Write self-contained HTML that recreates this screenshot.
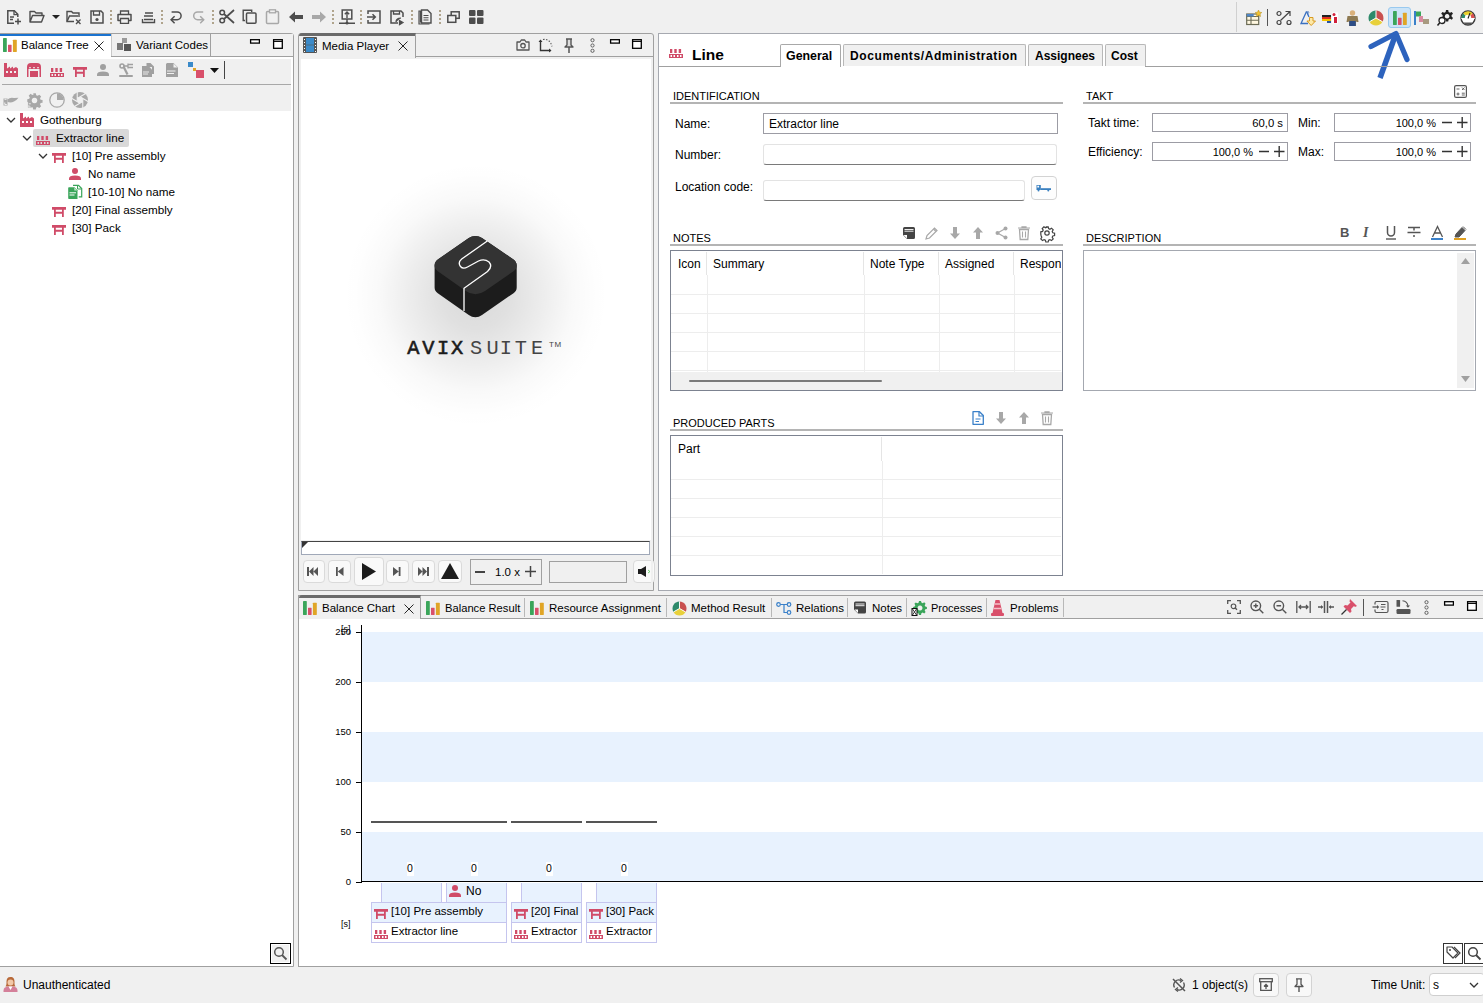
<!DOCTYPE html>
<html><head><meta charset="utf-8"><style>
*{margin:0;padding:0;box-sizing:border-box}
body{width:1483px;height:1003px;background:#f0f0f0;font-family:"Liberation Sans",sans-serif;font-size:12px;color:#000;position:relative;overflow:hidden}
.a{position:absolute}
.t{position:absolute;white-space:nowrap;line-height:14px;height:14px}
svg{position:absolute;overflow:visible}
.bd{border:1px solid #a0a0a0}
.w{background:#fff}
</style></head><body>


<svg width="0" height="0" style="position:absolute">
<defs>
<symbol id="factory" viewBox="0 0 14 14"><path fill="#d04b68" d="M0 0h3v5.5l3-2v2l3-2v2l3-1.5 2 1.5v8.5h-14z M2 8v2h2v-2z M6 8v2h2v-2z M10 8v2h2v-2z" fill-rule="evenodd"/></symbol>
<symbol id="warehouse" viewBox="0 0 14 14"><path fill="#d04b68" fill-rule="evenodd" d="M0 14V4Q0 0 4 0h6q4 0 4 4v10h-1.5V6H1.5V14z M2 4.3v1h2v-1z M6 4.3v1h2v-1z M10 4.3v1h2v-1z"/><rect x="3" y="8" width="8" height="6" fill="#d04b68"/></symbol>
<symbol id="line" viewBox="0 0 14 9"><path fill="#d04b68" fill-rule="evenodd" d="M1 0h2.3v4H1z M5.3 0h2.4v4H5.3z M9.7 0h2.4v4H9.7z M0 5h14v4H0z M1.5 6v2h1.5V6z M4.5 6v2h1.5V6z M8 6v2h1.5V6z M11 6v2h1.5V6z"/></symbol>
<symbol id="station" viewBox="0 0 14 10"><path fill="#d04b68" d="M0 0h14v2.8H0z M2 2.8h1.8V10H2z M10 2.8h1.8V10H10z M3.8 4.7h6.2v2H3.8z"/></symbol>
<symbol id="person" viewBox="0 0 12 12"><circle cx="6" cy="3" r="3" fill="currentColor"/><path fill="currentColor" d="M0 12v-1.5Q0 7.5 6 7.5t6 3V12z"/></symbol>
<symbol id="bars" viewBox="0 0 14 14"><rect x="0" y="0" width="3.8" height="14" rx=".4" fill="#3aa55a"/><rect x="5" y="6.7" width="3.6" height="7.3" rx=".4" fill="#d9506b"/><rect x="9.9" y="1.8" width="3.9" height="12.2" rx=".4" fill="#e0a526"/></symbol>
<symbol id="chev" viewBox="0 0 10 6"><path d="M1 1l4 4 4-4" fill="none" stroke="#333" stroke-width="1.3"/></symbol>
<symbol id="minbtn" viewBox="0 0 11 5"><rect x="1.6" y="0.7" width="8.8" height="3.4" fill="#fff" stroke="#000" stroke-width="1.3"/></symbol>
<symbol id="maxbtn" viewBox="0 0 11 10"><rect x="1.6" y="0.7" width="8.7" height="8.6" fill="#fff" stroke="#000" stroke-width="1.3"/><path d="M1.6 2.4h8.7" stroke="#000" stroke-width="1.1"/></symbol>
<symbol id="xbtn" viewBox="0 0 10 10"><path d="M0.5 0.5l9 9M9.5 0.5l-9 9" stroke="#111" stroke-width="0.9"/></symbol>
</defs>
</svg>
<!-- ============ PANELS ============ -->
<!-- left panel -->
<div class="a bd" style="left:-1px;top:33px;width:295px;height:934px;background:#fff;border-top-right-radius:3px"></div>
<div class="a" style="left:0;top:34px;width:293px;height:23px;background:#f0f0f0;border-bottom:1px solid #a0a0a0"></div>
<!-- media panel -->
<div class="a bd" style="left:298px;top:33px;width:356px;height:558px;background:#f0f0f0;border-top-right-radius:3px;border-top-left-radius:3px"></div>
<!-- editor panel -->
<div class="a bd" style="left:658px;top:33px;width:826px;height:558px;background:#fff;border-color:#a6a9b0"></div>
<!-- bottom panel -->
<div class="a bd" style="left:298px;top:595px;width:1186px;height:372px;background:#fff"></div>
<div class="a" style="left:299px;top:596px;width:1184px;height:23px;background:#f0f0f0"></div>



<!-- ============ TOP TOOLBAR ============ -->
<svg style="left:6px;top:9px" width="16" height="16" viewBox="0 0 16 16"><path d="M8 14.2H1.8V1.8h6.5l3.5 3.5V8" fill="none" stroke="#4d4d4d" stroke-width="1.5"/><path d="M8 1.8v3.8h3.8M4 8h4M4 10.5h3" fill="none" stroke="#4d4d4d" stroke-width="1.3"/><path d="M12 9.5v6M9 12.5h6" stroke="#4d4d4d" stroke-width="1.5"/></svg>
<svg style="left:29px;top:10px" width="16" height="13" viewBox="0 0 16 13"><path d="M1 12V1.5h4.5l1.5 1.5h6v2.5M1 12l2.5-6.5H15L12.5 12z" fill="none" stroke="#4d4d4d" stroke-width="1.4" stroke-linejoin="round"/></svg>
<svg style="left:52px;top:15px" width="8" height="4" viewBox="0 0 8 4"><path d="M0 0h8L4 4z" fill="#222"/></svg>
<svg style="left:66px;top:10px" width="16" height="15" viewBox="0 0 16 15"><path d="M8 11.5H1V1.5h4.5l1.5 1.5h6v4" fill="none" stroke="#4d4d4d" stroke-width="1.4"/><path d="M1 11.5l2.5-5.5H12" fill="none" stroke="#4d4d4d" stroke-width="1.4"/><path d="M10 9.5l4.5 4.5M14.5 9.5L10 14" stroke="#4d4d4d" stroke-width="1.4"/></svg>
<svg style="left:90px;top:10px" width="14" height="14" viewBox="0 0 14 14"><path d="M1 1h10l2 2v10H1z" fill="none" stroke="#4d4d4d" stroke-width="1.5"/><path d="M3.5 1v4h6V1" fill="none" stroke="#4d4d4d" stroke-width="1.3"/><circle cx="7" cy="9.5" r="1.6" fill="#4d4d4d"/></svg>
<div class="a" style="left:110px;top:10px;width:2px;height:15px;background:repeating-linear-gradient(#b0a48c 0 2px,transparent 2px 4px)"></div>
<svg style="left:117px;top:10px" width="15" height="14" viewBox="0 0 15 14"><path d="M3.5 4V1h8v3" fill="none" stroke="#4d4d4d" stroke-width="1.3"/><path d="M3 10.5H1V4.5h13v6h-2" fill="none" stroke="#4d4d4d" stroke-width="1.5" stroke-linejoin="round"/><path d="M3.5 8.5h8v4.8h-8z" fill="none" stroke="#4d4d4d" stroke-width="1.3"/></svg>
<svg style="left:141px;top:10px" width="15" height="14" viewBox="0 0 15 14"><path d="M4 3h8M3 6h9M1.5 9v3.5h12V9M3 9.5h9" fill="none" stroke="#4d4d4d" stroke-width="1.4"/></svg>
<div class="a" style="left:161px;top:10px;width:2px;height:15px;background:repeating-linear-gradient(#b0a48c 0 2px,transparent 2px 4px)"></div>
<svg style="left:165px;top:5px" width="45" height="25" viewBox="165 5 45 25"><path d="M171.6 11.9H177.2A3.9 3.9 0 0 1 177.2 19.7H171" fill="none" stroke="#4d4d4d" stroke-width="1.5"/><path d="M174.6 16.3L171.1 19.7 174.6 23.2" fill="none" stroke="#4d4d4d" stroke-width="1.5"/><path d="M203.2 11.9H197.6A3.9 3.9 0 0 0 197.6 19.7H203.5" fill="none" stroke="#a8a8a8" stroke-width="1.5"/><path d="M200.2 16.3L203.7 19.7 200.2 23.2" fill="none" stroke="#a8a8a8" stroke-width="1.5"/></svg>
<div class="a" style="left:212px;top:10px;width:2px;height:15px;background:repeating-linear-gradient(#b0a48c 0 2px,transparent 2px 4px)"></div>
<svg style="left:219px;top:9px" width="16" height="15" viewBox="0 0 16 15"><circle cx="3.2" cy="11.5" r="2.3" fill="none" stroke="#4d4d4d" stroke-width="1.5"/><circle cx="3.2" cy="3.5" r="2.3" fill="none" stroke="#4d4d4d" stroke-width="1.5"/><path d="M5 10L15 1M5 5l10 9" stroke="#4d4d4d" stroke-width="1.7"/></svg>
<svg style="left:242px;top:9px" width="15" height="15" viewBox="0 0 15 15"><path d="M3 11.5H1.2V1.2h8.5V3" fill="none" stroke="#4d4d4d" stroke-width="1.4"/><rect x="4.5" y="4" width="9.5" height="10.2" rx="1" fill="none" stroke="#4d4d4d" stroke-width="1.5"/></svg>
<svg style="left:265px;top:9px" width="15" height="15" viewBox="0 0 15 15"><rect x="1.5" y="2.5" width="12" height="12" rx="1" fill="none" stroke="#a8a8a8" stroke-width="1.5"/><rect x="4.5" y="0.8" width="6" height="3" fill="#f0f0f0" stroke="#a8a8a8" stroke-width="1.3"/></svg>
<svg style="left:289px;top:11px" width="14" height="12" viewBox="0 0 14 12"><path d="M0 6l6-5.5V4h8v4H6v3.5z" fill="#4d4d4d"/></svg>
<svg style="left:312px;top:11px" width="14" height="12" viewBox="0 0 14 12"><path d="M14 6L8 .5V4H0v4h8v3.5z" fill="#a8a8a8"/></svg>
<div class="a" style="left:332px;top:10px;width:2px;height:15px;background:repeating-linear-gradient(#b0a48c 0 2px,transparent 2px 4px)"></div>
<svg style="left:339px;top:9px" width="16" height="16" viewBox="0 0 16 16"><rect x="3.2" y="1" width="9.6" height="9" fill="none" stroke="#4d4d4d" stroke-width="1.5"/><path d="M8 9V3M5.8 5.2L8 3l2.2 2.2M8 10v3.5M0 14.2h16" fill="none" stroke="#4d4d4d" stroke-width="1.4"/><circle cx="8" cy="14" r="1.5" fill="#4d4d4d"/></svg>
<div class="a" style="left:360px;top:10px;width:2px;height:15px;background:repeating-linear-gradient(#b0a48c 0 2px,transparent 2px 4px)"></div>
<svg style="left:367px;top:10px" width="14" height="14" viewBox="0 0 14 14"><path d="M1 4V1h12v12H1v-3" fill="none" stroke="#4d4d4d" stroke-width="1.5"/><path d="M0 7h8M5.5 4.2L8.3 7l-2.8 2.8" fill="none" stroke="#4d4d4d" stroke-width="1.5"/></svg>
<svg style="left:390px;top:10px" width="16" height="15" viewBox="0 0 16 15"><path d="M8 13H1V1h10l2 2v4" fill="none" stroke="#4d4d4d" stroke-width="1.5"/><path d="M3.5 1v3h6V1" fill="none" stroke="#4d4d4d" stroke-width="1.3"/><path d="M6 12q0-4 5-4M9.5 10.5l3.5 2-3.5 2.2z" fill="#4d4d4d" stroke="#4d4d4d" stroke-width="1.2"/></svg>
<div class="a" style="left:411px;top:10px;width:2px;height:15px;background:repeating-linear-gradient(#b0a48c 0 2px,transparent 2px 4px)"></div>
<svg style="left:418px;top:9px" width="14" height="16" viewBox="0 0 14 16"><path d="M2.5 13.5V2H1v13h10.5" fill="none" stroke="#4d4d4d" stroke-width="1.2"/><path d="M3.5 1h6l3.5 3.5v9.5H3.5z" fill="none" stroke="#4d4d4d" stroke-width="1.4"/><path d="M5.5 6.5h5M5.5 8.8h5M5.5 11h5" stroke="#4d4d4d" stroke-width="1.1"/></svg>
<div class="a" style="left:439px;top:10px;width:2px;height:15px;background:repeating-linear-gradient(#b0a48c 0 2px,transparent 2px 4px)"></div>
<svg style="left:447px;top:11px" width="13" height="12" viewBox="0 0 13 12"><rect x="4.2" y="0.8" width="8" height="6.5" fill="none" stroke="#4d4d4d" stroke-width="1.5"/><rect x="0.8" y="4.5" width="8" height="6.8" fill="#f0f0f0" stroke="#4d4d4d" stroke-width="1.5"/></svg>
<svg style="left:469px;top:10px" width="15" height="14" viewBox="0 0 15 14"><rect x="0" y="0" width="6.5" height="6" rx="1" fill="#4d4d4d"/><rect x="8" y="0" width="6.5" height="6" rx="1" fill="#4d4d4d"/><rect x="0" y="7.5" width="6.5" height="6.5" rx="1" fill="#4d4d4d"/><rect x="8" y="7.5" width="6.5" height="6.5" rx="1" fill="#4d4d4d"/></svg>

<!-- right toolbar -->
<div class="a" style="left:1236px;top:2px;width:1px;height:30px;background:#d0d0d0"></div>
<svg style="left:1246px;top:10px" width="16" height="16" viewBox="0 0 16 16"><rect x="0.7" y="4" width="12" height="10.5" fill="#fff7e0" stroke="#6b6b55" stroke-width="1.2"/><path d="M0.7 6.5h12M0.7 10.2h12M5 4v10.5" stroke="#6b6b55" stroke-width="1.1"/><path d="M0.7 4h7v2.5h-7z" fill="#4f86c6"/><path d="M12.5 0l1 2.2 2.3.3-1.7 1.6.4 2.4-2-1.2-2 1.2.4-2.4L9.2 2.5l2.3-.3z" fill="#f2c230" stroke="#b48a10" stroke-width="0.5"/></svg>
<div class="a" style="left:1267px;top:9px;width:1px;height:17px;background:#555"></div>
<svg style="left:1276px;top:11px" width="16" height="14" viewBox="0 0 16 14"><circle cx="3" cy="2.5" r="2" fill="none" stroke="#444" stroke-width="1.2"/><circle cx="3" cy="11.5" r="2" fill="none" stroke="#444" stroke-width="1.2"/><circle cx="13" cy="11.5" r="2" fill="none" stroke="#444" stroke-width="1.2"/><path d="M4.5 9.5L14 0.5M9.5 0.5H14V5" fill="none" stroke="#444" stroke-width="1.2"/></svg>
<svg style="left:1300px;top:10px" width="16" height="16" viewBox="0 0 16 16"><path d="M6.5 1.5L1 13.5h7" fill="none" stroke="#3a70c0" stroke-width="1.3"/><path d="M6.5 1.5L9 7" stroke="#3a70c0" stroke-width="1.3"/><path d="M9.5 7.5h3.5v3.5h2.5l-4.3 4.5-4.3-4.5h2.6z" fill="#fde9a8" stroke="#d89a20" stroke-width="1"/><path d="M7 2.5l1-1 1 1M8 1.5v3" stroke="#3a70c0" stroke-width=".8" fill="none"/></svg>
<svg style="left:1322px;top:12px" width="16" height="12" viewBox="0 0 16 12"><rect x="0" y="3" width="9" height="2" fill="#222"/><rect x="0" y="5" width="9" height="2" fill="#e03020"/><rect x="0" y="7" width="9" height="2" fill="#f5c400"/><rect x="5" y="9" width="4" height="2" fill="#2a55a0"/><rect x="10" y="0.5" width="6" height="11" fill="#fff"/><circle cx="12" cy="2.5" r="1.5" fill="#d0203a"/><rect x="12" y="5" width="3" height="6" fill="#d0203a"/></svg>
<svg style="left:1346px;top:10px" width="13" height="16" viewBox="0 0 13 16"><circle cx="6.5" cy="3" r="2.7" fill="#d9b07a"/><path d="M1.5 6h10l1 6h-2l-.5-1v5H3v-5l-.5 1h-2z" fill="#8e7a52"/><rect x="3.3" y="11" width="6.4" height="5" fill="#2d4d86"/></svg>
<svg style="left:1368px;top:10px" width="16" height="16" viewBox="0 0 16 16"><path d="M8 8V0.5A7.5 7.5 0 0 1 14.5 11.7z" fill="#c9504f"/><path d="M8 8l6.5 3.7A7.5 7.5 0 0 1 1.5 11.7z" fill="#e8d03a"/><path d="M8 8L1.5 11.7A7.5 7.5 0 0 1 8 0.5z" fill="#2e8a6a"/><path d="M8 8V0.5M8 8l6.5 3.7M8 8l-6.5 3.7" stroke="#fff" stroke-width="1"/></svg>
<div class="a" style="left:1388px;top:7px;width:23px;height:21px;background:#cce4f7;border:1px solid #99c9ef;border-radius:3px"></div>
<svg style="left:1393px;top:11px" width="14" height="14"><use href="#bars"/></svg>
<svg style="left:1414px;top:11px" width="16" height="14" viewBox="0 0 16 14"><rect x="0" y="0" width="2" height="14" fill="#3a80c9"/><rect x="2" y="0.5" width="5" height="5" fill="#3aa55a"/><rect x="5" y="5" width="4" height="6" fill="#d88aa0"/><rect x="9" y="8" width="6" height="5" fill="#a89a80"/></svg>
<svg style="left:1437px;top:10px" width="16" height="16" viewBox="0 0 16 16"><path fill="#222" fill-rule="evenodd" d="M9 0h2.2l.4 2 1.4.8 1.8-.9 1.2 1.8-1.4 1.3v1.6l1.4 1.3-1.2 1.8-1.8-.9-1.4.8-.4 2H9l-.4-2-1.4-.8-1.8.9-1.2-1.8 1.4-1.3V5L4.2 3.7l1.2-1.8 1.8.9 1.4-.8z M10.1 4a2.3 2.3 0 1 0 .01 0z"/><circle cx="5" cy="10.5" r="3" fill="#fff" stroke="#222" stroke-width="1.3"/><path d="M3 12.5L0.5 15.5" stroke="#222" stroke-width="1.5"/></svg>
<svg style="left:1460px;top:10px" width="16" height="16" viewBox="0 0 16 16"><circle cx="8" cy="8" r="7" fill="#fff" stroke="#3a3a3a" stroke-width="1.4"/><path d="M8 8L1.3 8A6.7 6.7 0 0 1 3.3 3.2z" fill="#2e8a6a"/><path d="M8 8L3.3 3.2A6.7 6.7 0 0 1 12.7 3.2z" fill="#e8cf2a"/><path d="M8 8L12.7 3.2A6.7 6.7 0 0 1 14.7 8z" fill="#d9504f"/><circle cx="8" cy="8" r="3.2" fill="#fff"/><rect x="1.3" y="8" width="13.4" height="1" fill="#fff"/><path d="M8 8.5L10 3" stroke="#222" stroke-width="1.1"/><path d="M3.5 12.5h9A5.5 5.5 0 0 1 3.5 12.5z" fill="#555"/></svg>
<svg style="left:1365px;top:28px" width="50" height="55" viewBox="0 0 50 55"><path d="M15 50L31 5.5" stroke="#2d63bd" stroke-width="5.5" fill="none"/><path d="M6 18.5L31 5.5 42 31.5" stroke="#2d63bd" stroke-width="5.2" fill="none" stroke-linecap="round" stroke-linejoin="round"/></svg>


<!-- ============ MEDIA PANEL ============ -->
<div class="a" style="left:299px;top:33px;width:117px;height:25px;background:#f0f0f0;border-top:3px solid #6a6a6a;border-right:1px solid #a0a0a0;border-top-left-radius:3px"></div>
<div class="a" style="left:415px;top:56px;width:238px;height:1px;background:#a0a0a0"></div>
<svg style="left:303px;top:37px" width="14" height="16" viewBox="0 0 14 16"><rect x="0" y="0" width="14" height="16" rx="1" fill="#555"/><rect x="3" y="1" width="8" height="6.7" fill="#3a8ac9"/><rect x="3" y="8.3" width="8" height="6.7" fill="#3a8ac9"/><path d="M1.5 2v1M1.5 5v1M1.5 8v1M1.5 11v1M1.5 14v1M12.5 2v1M12.5 5v1M12.5 8v1M12.5 11v1M12.5 14v1" stroke="#fff" stroke-width="1"/></svg>
<div class="t" style="left:322px;top:39px;font-size:11.5px">Media Player</div>
<svg style="left:398px;top:41px" width="10" height="10"><use href="#xbtn"/></svg>
<svg style="left:516px;top:39px" width="14" height="12" viewBox="0 0 14 12"><path d="M1 3h3l1.3-2h3.4L10 3h3v8H1z" fill="none" stroke="#555" stroke-width="1.3" stroke-linejoin="round"/><circle cx="7" cy="6.7" r="2.2" fill="none" stroke="#555" stroke-width="1.3"/></svg>
<svg style="left:538px;top:38px" width="16" height="15" viewBox="0 0 16 15"><path d="M2.5 2.5v10h10" fill="none" stroke="#333" stroke-width="1.4"/><path d="M0.5 4l2-2.5 2 2.5z M11 10.5l2.5 2-2.5 2z" fill="#333"/><path d="M5 1.5q7-1 9 7" fill="none" stroke="#555" stroke-width="1.1" stroke-dasharray="1.5 1.5"/></svg>
<svg style="left:564px;top:38px" width="10" height="15" viewBox="0 0 10 15"><path d="M2 1h6M3 1v6L1 9h8L7 7V1" fill="#ddd" stroke="#555" stroke-width="1.4" stroke-linejoin="round"/><path d="M5 9v6" stroke="#555" stroke-width="1.5"/></svg>
<svg style="left:589px;top:38px" width="7" height="15" viewBox="0 0 7 15"><circle cx="3.5" cy="2.2" r="1.6" fill="none" stroke="#555" stroke-width="0.9"/><circle cx="3.5" cy="7.5" r="1.6" fill="none" stroke="#555" stroke-width="0.9"/><circle cx="3.5" cy="12.8" r="1.6" fill="none" stroke="#555" stroke-width="0.9"/></svg>
<svg style="left:608.5px;top:39px" width="11" height="5"><use href="#minbtn"/></svg>
<svg style="left:631px;top:39px" width="11" height="10"><use href="#maxbtn"/></svg>

<div class="a" style="left:301px;top:59px;width:350px;height:481px;background:#fff"></div>
<div class="a" style="left:341px;top:160px;width:270px;height:270px;border-radius:50%;background:radial-gradient(circle closest-side,rgba(0,0,0,0.15) 0%,rgba(0,0,0,0.12) 25%,rgba(0,0,0,0.07) 50%,rgba(0,0,0,0.025) 72%,rgba(0,0,0,0.005) 90%,rgba(0,0,0,0) 100%)"></div>
<svg style="left:430px;top:230px" width="92" height="92" viewBox="0 0 92 92">
<path d="M45.4 6Q49 6 52 8L83.5 29.5Q86.7 31.8 86.7 35.5L86.7 57.5Q86.7 61 83.5 63.2L52 85Q49 87.2 45.4 87.2Q41.8 87.2 38.8 85L7.8 63.2Q4.6 61 4.6 57.5L4.6 35.5Q4.6 31.8 7.8 29.5L38.8 8Q41.8 6 45.4 6z" fill="#1c1c1c"/>
<path d="M45.4 6Q49 6 52 8L83.5 29.5Q86.7 31.8 86.7 35.5Q86.7 39 83.5 41.2L55 61Q50.5 64.2 45.4 64.2Q40.3 64.2 35.8 61L7.8 41.2Q4.6 39 4.6 35.5Q4.6 31.8 7.8 29.5L38.8 8Q41.8 6 45.4 6z" fill="#333"/>
<path d="M57.3 11L31.7 29Q27.5 32.5 30.5 36.5Q33 39.5 37.5 37L48.5 31Q54.5 28.5 59 32Q63 36.5 57.5 41.5L34 58.3V81" fill="none" stroke="#fff" stroke-width="1.3"/>
</svg>
<div class="t" style="left:407.3px;top:337.5px;width:12px;text-align:center;font-family:'Liberation Mono',monospace;font-size:20.3px;line-height:22px;height:22px;color:#1a1a1a;-webkit-text-stroke:0.6px #1a1a1a;">A</div><div class="t" style="left:422.3px;top:337.5px;width:12px;text-align:center;font-family:'Liberation Mono',monospace;font-size:20.3px;line-height:22px;height:22px;color:#1a1a1a;-webkit-text-stroke:0.6px #1a1a1a;">V</div><div class="t" style="left:436.9px;top:337.5px;width:12px;text-align:center;font-family:'Liberation Mono',monospace;font-size:20.3px;line-height:22px;height:22px;color:#1a1a1a;-webkit-text-stroke:0.6px #1a1a1a;">I</div><div class="t" style="left:451px;top:337.5px;width:12px;text-align:center;font-family:'Liberation Mono',monospace;font-size:20.3px;line-height:22px;height:22px;color:#1a1a1a;-webkit-text-stroke:0.6px #1a1a1a;">X</div><div class="t" style="left:470px;top:337.5px;width:12px;text-align:center;font-family:'Liberation Mono',monospace;font-size:20.3px;line-height:22px;height:22px;color:#444;">S</div><div class="t" style="left:486.4px;top:337.5px;width:12px;text-align:center;font-family:'Liberation Mono',monospace;font-size:20.3px;line-height:22px;height:22px;color:#444;">U</div><div class="t" style="left:499.8px;top:337.5px;width:12px;text-align:center;font-family:'Liberation Mono',monospace;font-size:20.3px;line-height:22px;height:22px;color:#444;">I</div><div class="t" style="left:514.8px;top:337.5px;width:12px;text-align:center;font-family:'Liberation Mono',monospace;font-size:20.3px;line-height:22px;height:22px;color:#444;">T</div><div class="t" style="left:531px;top:337.5px;width:12px;text-align:center;font-family:'Liberation Mono',monospace;font-size:20.3px;line-height:22px;height:22px;color:#444;">E</div><div class="t" style="left:549px;top:340px;font-family:'Liberation Sans',sans-serif;font-size:8px;line-height:9px;height:9px;color:#444;letter-spacing:0.5px">TM</div>
<div class="a" style="left:301px;top:540px;width:350px;height:50px;background:#f0f0f0"></div>
<div class="a" style="left:301px;top:541px;width:349px;height:14px;background:#fff;border:1px solid #a0a8b8;border-top:1.5px solid #444"></div>
<svg style="left:302px;top:542px" width="6" height="6" viewBox="0 0 6 6"><path d="M0 0h6L0 6z" fill="#333"/></svg>
<div class="a" style="left:303px;top:560px;width:22px;height:23px;background:#f9f9f9;border:1px solid #dadada;border-radius:4px"></div>
<div class="a" style="left:328px;top:560px;width:23px;height:23px;background:#f9f9f9;border:1px solid #dadada;border-radius:4px"></div>
<div class="a" style="left:354px;top:557px;width:30px;height:29px;background:#f9f9f9;border:1px solid #dadada;border-radius:4px"></div>
<div class="a" style="left:386px;top:560px;width:23px;height:23px;background:#f9f9f9;border:1px solid #dadada;border-radius:4px"></div>
<div class="a" style="left:412px;top:560px;width:23px;height:23px;background:#f9f9f9;border:1px solid #dadada;border-radius:4px"></div>
<div class="a" style="left:438px;top:560px;width:24px;height:23px;background:#f9f9f9;border:1px solid #dadada;border-radius:4px"></div>
<svg style="left:307px;top:567px" width="12" height="9" viewBox="0 0 12 9"><path d="M0 0h2v9H0z M2 4.5L6.5 0v9z M6.5 4.5L11 0v9z" fill="#555"/></svg>
<svg style="left:336px;top:567px" width="8" height="9" viewBox="0 0 8 9"><path d="M0 0h1.8v9H0z M1.8 4.5L7.5 0v9z" fill="#555"/></svg>
<svg style="left:362px;top:563px" width="14" height="17" viewBox="0 0 14 17"><path d="M0 0L14 8.5 0 17z" fill="#1c1c1c"/></svg>
<svg style="left:393px;top:567px" width="8" height="9" viewBox="0 0 8 9"><path d="M0 0l5.7 4.5L0 9z M5.7 0h1.8v9H5.7z" fill="#555"/></svg>
<svg style="left:418px;top:567px" width="12" height="9" viewBox="0 0 12 9"><path d="M0 0l4.5 4.5L0 9z M4.5 0L9 4.5 4.5 9z M9 0h2v9H9z" fill="#555"/></svg>
<svg style="left:440px;top:562px" width="20" height="18" viewBox="0 0 20 18"><path d="M10 1L19 17H1z" fill="#1c1c1c"/></svg>
<div class="a" style="left:470px;top:559px;width:72px;height:26px;background:#f0f0f0;border:1px solid #a0a0a0"></div>
<div class="a" style="left:475px;top:571px;width:10px;height:1.5px;background:#444"></div>
<div class="t" style="left:495px;top:565px;font-size:11.5px">1.0 x</div>
<svg style="left:525px;top:566px" width="11" height="11" viewBox="0 0 11 11"><path d="M0 5.5h11M5.5 0v11" stroke="#444" stroke-width="1.5"/></svg>
<div class="a" style="left:549px;top:561px;width:78px;height:22px;background:#f0f0f0;border:1px solid #a0a0a0"></div>
<div class="a" style="left:633px;top:560px;width:22px;height:23px;background:#f9f9f9;border:1px solid #dadada;border-radius:4px"></div>
<svg style="left:638px;top:566px" width="13" height="11" viewBox="0 0 13 11"><path d="M0 3h3l5-3v11L3 8H0z" fill="#1c1c1c"/><path d="M10 4l2 1.5L10 7" stroke="#5c5" stroke-width="0.8" fill="none"/></svg>
<div class="a" style="left:651px;top:540px;width:2px;height:50px;background:#f0f0f0"></div>


<!-- ============ EDITOR PANEL ============ -->
<div class="a" style="left:659px;top:66px;width:121px;height:1px;background:#a0a0a0"></div>
<div class="a" style="left:1145px;top:66px;width:338px;height:1px;background:#a0a0a0"></div>
<svg style="left:669px;top:49px" width="14" height="9"><use href="#line"/></svg>
<div class="t" style="left:692px;top:46px;font-size:15.5px;font-weight:bold;line-height:18px;height:18px">Line</div>
<div class="a" style="left:780px;top:44px;width:61px;height:23px;background:#fff;border:1px solid #a8a8a8;border-bottom:none;border-radius:2px 2px 0 0"></div>
<div class="a" style="left:843px;top:44px;width:183px;height:22px;background:#f0f0f0;border:1px solid #b8b8b8;border-bottom:none;border-radius:2px 2px 0 0"></div>
<div class="a" style="left:1028px;top:44px;width:75px;height:22px;background:#f0f0f0;border:1px solid #b8b8b8;border-bottom:none;border-radius:2px 2px 0 0"></div>
<div class="a" style="left:1105px;top:44px;width:41px;height:22px;background:#f0f0f0;border:1px solid #b8b8b8;border-bottom:none;border-radius:2px 2px 0 0"></div>
<div class="t" style="left:786px;top:49px;font-weight:bold;font-size:12.4px">General</div>
<div class="t" style="left:850px;top:49px;font-weight:bold;letter-spacing:0.6px">Documents/Administration</div>
<div class="t" style="left:1035px;top:49px;font-weight:bold">Assignees</div>
<div class="t" style="left:1111px;top:49px;font-weight:bold">Cost</div>

<div class="t" style="left:673px;top:89px;font-size:11px">IDENTIFICATION</div>
<div class="a" style="left:670px;top:102px;width:393px;height:2px;background:#b4b4b4"></div>
<div class="t" style="left:675px;top:117px">Name:</div>
<div class="a" style="left:763px;top:113px;width:295px;height:21px;background:#fff;border:1px solid #9c9ca4"></div>
<div class="t" style="left:769px;top:117px">Extractor line</div>
<div class="t" style="left:675px;top:148px">Number:</div>
<div class="a" style="left:763px;top:144px;width:294px;height:21px;background:#fff;border:1px solid #e3e3e3;border-bottom:1px solid #7a7a7a;border-radius:3px"></div>
<div class="t" style="left:675px;top:180px">Location code:</div>
<div class="a" style="left:763px;top:180px;width:262px;height:21px;background:#fff;border:1px solid #e3e3e3;border-bottom:1px solid #7a7a7a;border-radius:3px"></div>
<div class="a" style="left:1031px;top:176px;width:26px;height:24px;background:#fdfdfd;border:1px solid #d3d3d3;border-radius:4px"></div>
<svg style="left:1036px;top:184px" width="16" height="8" viewBox="1036 184 16 8"><path d="M1036.5 185h4.3v5h-4.3z M1037.3 185.8v1.8h1.8v-1.8z" fill="#3a80c0" fill-rule="evenodd"/><path d="M1040.8 188.2h10.2v1.8h-10.2z" fill="#3a80c0"/><circle cx="1038.5" cy="190.6" r="1" fill="#3a80c0"/><circle cx="1048.3" cy="190.6" r="1" fill="#3a80c0"/></svg>

<div class="t" style="left:1086px;top:89px;font-size:11px">TAKT</div>
<div class="a" style="left:1083px;top:102px;width:393px;height:2px;background:#b4b4b4"></div>
<svg style="left:1454px;top:85px" width="13" height="13" viewBox="0 0 13 13"><rect x="0.6" y="0.6" width="11.8" height="11.8" rx="1.5" fill="none" stroke="#555" stroke-width="1.2"/><path d="M2.5 4h3M8 2.5l2.5 2.5M10.5 2.5L8 5M2.5 9h3M4 7.5v3M7.8 8.2h3M7.8 10h3" stroke="#555" stroke-width="0.9"/></svg>
<div class="t" style="left:1088px;top:116px">Takt time:</div>
<div class="a" style="left:1152px;top:113px;width:136px;height:19px;background:#fff;border:1px solid #9c9ca4"></div>
<div class="t" style="left:1283px;top:116px;transform:translateX(-100%);font-size:11.3px">60,0 s</div>
<div class="t" style="left:1298px;top:116px">Min:</div>
<div class="a" style="left:1334px;top:113px;width:137px;height:19px;background:#fff;border:1px solid #9c9ca4"></div>
<div class="t" style="left:1436px;top:116px;transform:translateX(-100%);font-size:11px">100,0 %</div>
<div class="t" style="left:1088px;top:145px">Efficiency:</div>
<div class="a" style="left:1152px;top:142px;width:136px;height:19px;background:#fff;border:1px solid #9c9ca4"></div>
<div class="t" style="left:1253px;top:145px;transform:translateX(-100%);font-size:11px">100,0 %</div>
<div class="t" style="left:1298px;top:145px">Max:</div>
<div class="a" style="left:1334px;top:142px;width:137px;height:19px;background:#fff;border:1px solid #9c9ca4"></div>
<div class="t" style="left:1436px;top:145px;transform:translateX(-100%);font-size:11px">100,0 %</div>
<svg style="left:1259px;top:146px" width="26" height="11" viewBox="0 0 26 11"><path d="M0 5.5h10M15 5.5h10.5M20.2 0v11" stroke="#333" stroke-width="1.4"/></svg>
<svg style="left:1442px;top:117px" width="26" height="11" viewBox="0 0 26 11"><path d="M0 5.5h10M15 5.5h10.5M20.2 0v11" stroke="#333" stroke-width="1.4"/></svg>
<svg style="left:1442px;top:146px" width="26" height="11" viewBox="0 0 26 11"><path d="M0 5.5h10M15 5.5h10.5M20.2 0v11" stroke="#333" stroke-width="1.4"/></svg>

<div class="t" style="left:673px;top:231px;font-size:11px">NOTES</div>
<div class="a" style="left:670px;top:244px;width:393px;height:2px;background:#b4b4b4"></div>
<svg style="left:903px;top:227px" width="12" height="12" viewBox="0 0 12 12"><path d="M1.5 0h9A1.5 1.5 0 0 1 12 1.5V10.5A1.5 1.5 0 0 1 10.5 12H4L0 8V1.5A1.5 1.5 0 0 1 1.5 0z" fill="#444"/><path d="M1.5 2.5h9M1.5 4.2h9" stroke="#fff" stroke-width="0.9"/><path d="M0.5 8h3.5v3.5z" fill="#fff"/></svg>
<svg style="left:925px;top:227px" width="13" height="13" viewBox="0 0 13 13"><path d="M1 12l1-3.5L9.5 1l2.5 2.5L4.5 11z" fill="none" stroke="#a8a8a8" stroke-width="1.2"/><path d="M8.5 2l2.5 2.5" stroke="#a8a8a8" stroke-width="1.2"/></svg>
<svg style="left:950px;top:227px" width="10" height="12" viewBox="0 0 10 12"><path d="M3 0h4v6.5h3L5 12 0 6.5h3z" fill="#a8a8a8"/></svg>
<svg style="left:973px;top:227px" width="10" height="12" viewBox="0 0 10 12"><path d="M3 12h4V5.5h3L5 0 0 5.5h3z" fill="#a8a8a8"/></svg>
<svg style="left:995px;top:226px" width="13" height="14" viewBox="0 0 13 14"><circle cx="10.5" cy="2.5" r="2" fill="#a8a8a8"/><circle cx="2.5" cy="7" r="2" fill="#a8a8a8"/><circle cx="10.5" cy="11.5" r="2" fill="#a8a8a8"/><path d="M10.5 2.5L2.5 7l8 4.5" fill="none" stroke="#a8a8a8" stroke-width="1.2"/></svg>
<svg style="left:1018px;top:226px" width="12" height="14" viewBox="0 0 12 14"><path d="M0 2h12M4 2V0.8h4V2" fill="none" stroke="#a8a8a8" stroke-width="1.2"/><path d="M1.5 3.5h9l-.7 10H2.2z" fill="none" stroke="#a8a8a8" stroke-width="1.3"/><path d="M4.5 5.5v6M7.5 5.5v6" stroke="#a8a8a8" stroke-width="1.1"/></svg>
<svg style="left:1040px;top:226px" width="14" height="14" viewBox="0 0 14 14"><path fill="none" stroke="#444" stroke-width="1.2" d="M5.8 0.8h2.4l.4 1.8 1.3.6 1.6-1 1.7 1.7-1 1.6.6 1.3 1.8.4v2.4l-1.8.4-.6 1.3 1 1.6-1.7 1.7-1.6-1-1.3.6-.4 1.8H5.8l-.4-1.8-1.3-.6-1.6 1-1.7-1.7 1-1.6-.6-1.3L.8 8.2V5.8l1.8-.4.6-1.3-1-1.6 1.7-1.7 1.6 1 1.3-.6z"/><circle cx="7" cy="7" r="2.2" fill="none" stroke="#444" stroke-width="1.2"/></svg>
<div class="a" style="left:670px;top:250px;width:393px;height:141px;background:#fff;border:1px solid #7c8290"></div>
<div class="a" style="left:706px;top:252px;width:1px;height:23px;background:#e5e5e5"></div><div class="a" style="left:863px;top:252px;width:1px;height:23px;background:#e5e5e5"></div><div class="a" style="left:938px;top:252px;width:1px;height:23px;background:#e5e5e5"></div><div class="a" style="left:1013px;top:252px;width:1px;height:23px;background:#e5e5e5"></div><div class="a" style="left:671px;top:294px;width:390px;height:1px;background:#ededed"></div><div class="a" style="left:671px;top:313px;width:390px;height:1px;background:#ededed"></div><div class="a" style="left:671px;top:332px;width:390px;height:1px;background:#ededed"></div><div class="a" style="left:671px;top:351px;width:390px;height:1px;background:#ededed"></div><div class="a" style="left:671px;top:370px;width:390px;height:1px;background:#ededed"></div><div class="a" style="left:707px;top:275px;width:1px;height:97px;background:#ededed"></div><div class="a" style="left:864px;top:275px;width:1px;height:97px;background:#ededed"></div><div class="a" style="left:939px;top:275px;width:1px;height:97px;background:#ededed"></div><div class="a" style="left:1014px;top:275px;width:1px;height:97px;background:#ededed"></div>
<div class="t" style="left:678px;top:257px">Icon</div>
<div class="t" style="left:713px;top:257px">Summary</div>
<div class="t" style="left:870px;top:257px">Note Type</div>
<div class="t" style="left:945px;top:257px">Assigned</div>
<div class="a" style="left:1014px;top:252px;width:47px;height:20px;overflow:hidden"><div class="t" style="left:6px;top:5px">Responsible</div></div>
<div class="a" style="left:671px;top:372px;width:391px;height:18px;background:#f0f0f0"></div>
<div class="a" style="left:689px;top:380px;width:193px;height:2px;background:#7a7a7a;border-radius:1px"></div>

<div class="t" style="left:1086px;top:231px;font-size:11px">DESCRIPTION</div>
<div class="a" style="left:1083px;top:244px;width:393px;height:2px;background:#b4b4b4"></div>
<div class="t" style="left:1340px;top:225px;font-weight:bold;font-size:13px;color:#555;line-height:15px">B</div>
<div class="t" style="left:1363px;top:225px;font-weight:bold;font-style:italic;font-family:'Liberation Serif',serif;font-size:14px;color:#555;line-height:15px">I</div>
<svg style="left:1386px;top:226px" width="10" height="14" viewBox="0 0 10 14"><path d="M1.5 0v6.5a3.5 3.5 0 0 0 7 0V0" fill="none" stroke="#555" stroke-width="1.5"/><path d="M0 13h10" stroke="#555" stroke-width="1.4"/></svg>
<svg style="left:1407px;top:226px" width="14" height="13" viewBox="0 0 14 13"><path d="M1 1.5h12M7 1.5v3M0.5 6.5h13" stroke="#555" stroke-width="1.5"/><circle cx="7" cy="10" r="1" fill="#555"/></svg>
<svg style="left:1431px;top:226px" width="13" height="14" viewBox="0 0 13 14"><path d="M1.5 11L6.5 0.5 11.5 11M3.5 7h6" fill="none" stroke="#555" stroke-width="1.3"/><rect x="0" y="12" width="12" height="2" fill="#3a80c9"/></svg>
<svg style="left:1454px;top:226px" width="13" height="14" viewBox="0 0 13 14"><path d="M1 11l1-3 6-6.5 3 3L5 11z M9 0.5l3 3" fill="#555" stroke="#555" stroke-width="1"/><rect x="0" y="12" width="12" height="2" fill="#e0a020"/></svg>
<div class="a" style="left:1083px;top:250px;width:393px;height:141px;background:#fff;border:1px solid #a4a8b0"></div>
<div class="a" style="left:1457px;top:253px;width:17px;height:135px;background:#f0f0f0"></div>
<svg style="left:1461px;top:258px" width="9" height="6" viewBox="0 0 9 6"><path d="M4.5 0L9 6H0z" fill="#a0a0a0"/></svg>
<svg style="left:1461px;top:376px" width="9" height="6" viewBox="0 0 9 6"><path d="M4.5 6L9 0H0z" fill="#a0a0a0"/></svg>

<div class="t" style="left:673px;top:416px;font-size:11px">PRODUCED PARTS</div>
<div class="a" style="left:670px;top:429px;width:393px;height:2px;background:#b4b4b4"></div>
<svg style="left:972px;top:411px" width="12" height="14" viewBox="0 0 12 14"><path d="M1 0.7h6.5L11.3 4.5V13.3H1z" fill="none" stroke="#3a80c9" stroke-width="1.3" stroke-linejoin="round"/><path d="M7 0.7V5h4.3M3.5 8h5M3.5 10.5h3.5" fill="none" stroke="#3a80c9" stroke-width="1.2"/></svg>
<svg style="left:996px;top:412px" width="10" height="12" viewBox="0 0 10 12"><path d="M3 0h4v6.5h3L5 12 0 6.5h3z" fill="#a8a8a8"/></svg>
<svg style="left:1019px;top:412px" width="10" height="12" viewBox="0 0 10 12"><path d="M3 12h4V5.5h3L5 0 0 5.5h3z" fill="#a8a8a8"/></svg>
<svg style="left:1041px;top:411px" width="12" height="14" viewBox="0 0 12 14"><path d="M0 2h12M4 2V0.8h4V2" fill="none" stroke="#a8a8a8" stroke-width="1.2"/><path d="M1.5 3.5h9l-.7 10H2.2z" fill="none" stroke="#a8a8a8" stroke-width="1.3"/><path d="M4.5 5.5v6M7.5 5.5v6" stroke="#a8a8a8" stroke-width="1.1"/></svg>
<div class="a" style="left:670px;top:435px;width:393px;height:141px;background:#fff;border:1px solid #7c8290"></div>
<div class="a" style="left:671px;top:479px;width:390px;height:1px;background:#ededed"></div><div class="a" style="left:671px;top:498px;width:390px;height:1px;background:#ededed"></div><div class="a" style="left:671px;top:517px;width:390px;height:1px;background:#ededed"></div><div class="a" style="left:671px;top:536px;width:390px;height:1px;background:#ededed"></div><div class="a" style="left:671px;top:555px;width:390px;height:1px;background:#ededed"></div>
<div class="a" style="left:881px;top:437px;width:1px;height:24px;background:#e5e5e5"></div>
<div class="a" style="left:882px;top:461px;width:1px;height:113px;background:#ededed"></div>
<div class="t" style="left:678px;top:442px">Part</div>


<!-- ============ BOTTOM PANEL ============ -->
<div class="a" style="left:299px;top:595px;width:122px;height:24px;background:#f0f0f0;border-top:3px solid #6a6a6a;border-right:1px solid #a0a0a0;border-top-left-radius:3px"></div>
<div class="a" style="left:524px;top:598px;width:1px;height:19px;background:#b8b8b8"></div>
<div class="a" style="left:666px;top:598px;width:1px;height:19px;background:#b8b8b8"></div>
<div class="a" style="left:771px;top:598px;width:1px;height:19px;background:#b8b8b8"></div>
<div class="a" style="left:847px;top:598px;width:1px;height:19px;background:#b8b8b8"></div>
<div class="a" style="left:906px;top:598px;width:1px;height:19px;background:#b8b8b8"></div>
<div class="a" style="left:986px;top:598px;width:1px;height:19px;background:#b8b8b8"></div>
<div class="a" style="left:1063px;top:598px;width:1px;height:19px;background:#b8b8b8"></div>
<div class="a" style="left:421px;top:618px;width:1062px;height:1px;background:#a0a0a0"></div>
<svg style="left:303px;top:601px" width="14" height="14"><use href="#bars"/></svg>
<div class="t" style="left:322px;top:601px;font-size:11.5px">Balance Chart</div>
<svg style="left:404px;top:604px" width="10" height="10"><use href="#xbtn"/></svg>
<svg style="left:426px;top:601px" width="14" height="14"><use href="#bars"/></svg>
<div class="t" style="left:445px;top:601px;font-size:11.2px">Balance Result</div>
<svg style="left:530px;top:601px" width="14" height="14"><use href="#bars"/></svg>
<div class="t" style="left:549px;top:601px;font-size:11.5px">Resource Assignment</div>
<svg style="left:672px;top:601px" width="15" height="15" viewBox="0 0 16 16"><path d="M8 8V0.5A7.5 7.5 0 0 1 14.5 11.7z" fill="#c9504f"/><path d="M8 8l6.5 3.7A7.5 7.5 0 0 1 1.5 11.7z" fill="#e8d03a"/><path d="M8 8L1.5 11.7A7.5 7.5 0 0 1 8 0.5z" fill="#2e8a6a"/><path d="M8 8V0.5M8 8l6.5 3.7M8 8l-6.5 3.7" stroke="#fff" stroke-width="1"/></svg>
<div class="t" style="left:691px;top:601px;font-size:11.5px">Method Result</div>
<svg style="left:776px;top:602px" width="16" height="13" viewBox="0 0 16 13"><circle cx="2.5" cy="2.5" r="1.8" fill="none" stroke="#3a80c9" stroke-width="1.2"/><circle cx="13" cy="2.5" r="1.8" fill="none" stroke="#3a80c9" stroke-width="1.2"/><circle cx="13" cy="10.5" r="1.8" fill="none" stroke="#3a80c9" stroke-width="1.2"/><path d="M4.3 2.5h6.9M8 2.5v8h3.2" fill="none" stroke="#3a80c9" stroke-width="1.2"/></svg>
<div class="t" style="left:796px;top:601px;font-size:11.5px">Relations</div>
<svg style="left:854px;top:601px" width="12" height="13" viewBox="0 0 12 12"><path d="M1.5 0h9A1.5 1.5 0 0 1 12 1.5V10.5A1.5 1.5 0 0 1 10.5 12H4L0 8V1.5A1.5 1.5 0 0 1 1.5 0z" fill="#444"/><path d="M1.5 2.5h9M1.5 4.2h9" stroke="#fff" stroke-width="0.9"/><path d="M0.5 8h3.5v3.5z" fill="#fff"/></svg>
<div class="t" style="left:872px;top:601px;font-size:11.5px">Notes</div>
<svg style="left:911px;top:600px" width="16" height="16" viewBox="0 0 16 16"><path fill="#3aa55a" fill-rule="evenodd" d="M8 1h2l.4 1.6 1.3.6 1.5-.9 1.4 1.4-.9 1.5.6 1.3 1.6.4v2l-1.6.4-.6 1.3.9 1.5-1.4 1.4-1.5-.9-1.3.6L10 15H8l-.4-1.6-1.3-.6-1.5.9-1.4-1.4.9-1.5-.6-1.3L2.1 9V7l1.6-.4.6-1.3-.9-1.5 1.4-1.4 1.5.9 1.3-.6z M9 5.5a2.5 2.5 0 1 0 .01 0z"/><rect x="1" y="8.5" width="5" height="7" fill="#fff" stroke="#111" stroke-width="1"/><path d="M1.5 9l4 6M5.5 9l-4 6" stroke="#111" stroke-width="0.8"/></svg>
<div class="t" style="left:931px;top:601px;font-size:11px">Processes</div>
<svg style="left:991px;top:600px" width="13" height="16" viewBox="0 0 13 16"><path d="M4.5 0h4l3 13h-10z" fill="#d9506b"/><path d="M3.7 4h5.6M2.7 8.5h7.6" stroke="#f4c0c8" stroke-width="1.6"/><rect x="0" y="13" width="13" height="3" rx="1" fill="#d9506b"/></svg>
<div class="t" style="left:1010px;top:601px;font-size:11.5px">Problems</div>

<svg style="left:1227px;top:600px" width="14" height="14" viewBox="0 0 14 14"><path d="M0.7 4V0.7H4M10 0.7h3.3V4M13.3 10v3.3H10M4 13.3H0.7V10" fill="none" stroke="#555" stroke-width="1.3"/><circle cx="6.5" cy="6.3" r="2.3" fill="none" stroke="#555" stroke-width="1.2"/><path d="M8.2 8l1.8 1.8" stroke="#555" stroke-width="1.3"/></svg>
<svg style="left:1250px;top:600px" width="14" height="14" viewBox="0 0 14 14"><circle cx="5.8" cy="5.8" r="4.8" fill="none" stroke="#555" stroke-width="1.4"/><path d="M9.3 9.3l4 4M3.5 5.8h4.6M5.8 3.5v4.6" stroke="#555" stroke-width="1.4"/></svg>
<svg style="left:1273px;top:600px" width="14" height="14" viewBox="0 0 14 14"><circle cx="5.8" cy="5.8" r="4.8" fill="none" stroke="#555" stroke-width="1.4"/><path d="M9.3 9.3l4 4M3.5 5.8h4.6" stroke="#555" stroke-width="1.4"/></svg>
<svg style="left:1296px;top:600px" width="15" height="14" viewBox="0 0 15 14"><path d="M0.8 1v12M14.2 1v12M3 7h9M5 5l-2 2 2 2M10 5l2 2-2 2" fill="none" stroke="#555" stroke-width="1.3"/></svg>
<svg style="left:1318px;top:600px" width="16" height="14" viewBox="0 0 16 14"><path d="M6.5 1v12M9.5 1v12M0 7h4.5M11.5 7H16" fill="none" stroke="#555" stroke-width="1.5"/><path d="M3 5l2.2 2L3 9zM13 5l-2.2 2 2.2 2z" fill="#555"/></svg>
<svg style="left:1341px;top:599px" width="16" height="16" viewBox="0 0 16 16"><path d="M9 0l7 7-2 1-1-1-3 3 .5 2.5-1.5 1.5-6.5-6.5L4 6l2.5.5 3-3-1-1z" fill="#d9506b"/><path d="M5.5 10.5L0.5 15.5" stroke="#333" stroke-width="1.2"/></svg>
<div class="a" style="left:1363px;top:599px;width:1px;height:17px;background:#555"></div>
<svg style="left:1371px;top:599px" width="42" height="17" viewBox="1371 599 42 17"><path d="M1375 604.5V603q0-1.5 1.5-1.5h10q1.5 0 1.5 1.5v8q0 1.5-1.5 1.5h-10q-1.5 0-1.5-1.5v-1.5" fill="none" stroke="#555" stroke-width="1.2"/><path d="M1372.5 607h5.5" stroke="#555" stroke-width="1.3"/><path d="M1377 605l2.2 2-2.2 2z" fill="#555"/><path d="M1381 604.5h4.5M1380.5 607h5M1381.5 609.5h2" stroke="#555" stroke-width="1.1"/><rect x="1396.5" y="600" width="3.6" height="6.8" rx=".6" fill="#555"/><rect x="1396.5" y="609" width="14" height="5" rx="1.2" fill="#555"/><path d="M1402.5 600.8q5 .3 5.5 5.5" fill="none" stroke="#555" stroke-width="1.1"/><path d="M1405.8 605.5l2.2 2.3 2-2.3z" fill="#555"/></svg>
<svg style="left:1423px;top:600px" width="7" height="15" viewBox="0 0 7 15"><circle cx="3.5" cy="2.2" r="1.6" fill="none" stroke="#555" stroke-width="0.9"/><circle cx="3.5" cy="7.5" r="1.6" fill="none" stroke="#555" stroke-width="0.9"/><circle cx="3.5" cy="12.8" r="1.6" fill="none" stroke="#555" stroke-width="0.9"/></svg>
<svg style="left:1443px;top:601px" width="11" height="5"><use href="#minbtn"/></svg>
<svg style="left:1466px;top:601px" width="11" height="10"><use href="#maxbtn"/></svg>

<!-- chart -->
<div class="a" style="left:362px;top:632px;width:1121px;height:50px;background:#e8f2fe"></div>
<div class="a" style="left:362px;top:732px;width:1121px;height:50px;background:#e8f2fe"></div>
<div class="a" style="left:362px;top:832px;width:1121px;height:50px;background:#e8f2fe"></div>
<div class="a" style="left:361px;top:625px;width:1.2px;height:258px;background:#000"></div>
<div class="a" style="left:361px;top:881.2px;width:1122px;height:1.3px;background:#000"></div>
<div class="a" style="left:356px;top:632px;width:5px;height:1.2px;background:#000"></div><div class="t" style="left:351px;top:626px;font-size:9.5px;line-height:12px;height:12px;transform:translateX(-100%)">250</div><div class="a" style="left:356px;top:682px;width:5px;height:1.2px;background:#000"></div><div class="t" style="left:351px;top:676px;font-size:9.5px;line-height:12px;height:12px;transform:translateX(-100%)">200</div><div class="a" style="left:356px;top:732px;width:5px;height:1.2px;background:#000"></div><div class="t" style="left:351px;top:726px;font-size:9.5px;line-height:12px;height:12px;transform:translateX(-100%)">150</div><div class="a" style="left:356px;top:782px;width:5px;height:1.2px;background:#000"></div><div class="t" style="left:351px;top:776px;font-size:9.5px;line-height:12px;height:12px;transform:translateX(-100%)">100</div><div class="a" style="left:356px;top:832px;width:5px;height:1.2px;background:#000"></div><div class="t" style="left:351px;top:826px;font-size:9.5px;line-height:12px;height:12px;transform:translateX(-100%)">50</div><div class="a" style="left:356px;top:882px;width:5px;height:1.2px;background:#000"></div><div class="t" style="left:351px;top:876px;font-size:9.5px;line-height:12px;height:12px;transform:translateX(-100%)">0</div><div class="t" style="left:341px;top:623px;font-size:9px;line-height:12px">[s]</div><div class="t" style="left:341px;top:918px;font-size:9px;line-height:12px">[s]</div>
<div class="a" style="left:371px;top:821px;width:136px;height:2px;background:#555"></div>
<div class="a" style="left:511px;top:821px;width:71px;height:2px;background:#555"></div>
<div class="a" style="left:586px;top:821px;width:71px;height:2px;background:#555"></div>
<div class="a" style="left:406.5px;top:862px;width:7px;height:14px;background:#fff"></div><div class="t" style="left:407px;top:861px;font-size:10.5px;line-height:15px">0</div><div class="a" style="left:470.5px;top:862px;width:7px;height:14px;background:#fff"></div><div class="t" style="left:471px;top:861px;font-size:10.5px;line-height:15px">0</div><div class="a" style="left:545.5px;top:862px;width:7px;height:14px;background:#fff"></div><div class="t" style="left:546px;top:861px;font-size:10.5px;line-height:15px">0</div><div class="a" style="left:620.5px;top:862px;width:7px;height:14px;background:#fff"></div><div class="t" style="left:621px;top:861px;font-size:10.5px;line-height:15px">0</div>
<div class="a" style="left:381px;top:883px;width:61px;height:20px;background:#e8f2fe;border:1px solid #c5c5ee;border-top:none"></div>
<div class="a" style="left:446px;top:883px;width:61px;height:20px;background:#e8f2fe;border:1px solid #c5c5ee;border-top:none"></div>
<div class="a" style="left:521px;top:883px;width:61px;height:20px;background:#e8f2fe;border:1px solid #c5c5ee;border-top:none"></div>
<div class="a" style="left:596px;top:883px;width:61px;height:20px;background:#e8f2fe;border:1px solid #c5c5ee;border-top:none"></div>
<div class="a" style="left:371px;top:902px;width:136px;height:21px;background:#e8f2fe;border:1px solid #c5c5ee"></div>
<div class="a" style="left:511px;top:902px;width:71px;height:21px;background:#e8f2fe;border:1px solid #c5c5ee"></div>
<div class="a" style="left:586px;top:902px;width:71px;height:21px;background:#e8f2fe;border:1px solid #c5c5ee"></div>
<div class="a" style="left:371px;top:922px;width:136px;height:21px;background:#fff;border:1px solid #c5c5ee"></div>
<div class="a" style="left:511px;top:922px;width:71px;height:21px;background:#fff;border:1px solid #c5c5ee"></div>
<div class="a" style="left:586px;top:922px;width:71px;height:21px;background:#fff;border:1px solid #c5c5ee"></div>
<svg style="left:449px;top:885px;color:#d04b68" width="12" height="12"><use href="#person"/></svg>
<div class="t" style="left:466px;top:884px">No</div>
<svg style="left:374px;top:909px" width="14" height="10"><use href="#station"/></svg>
<div class="t" style="left:391px;top:904px;font-size:11.5px">[10] Pre assembly</div>
<svg style="left:514px;top:909px" width="14" height="10"><use href="#station"/></svg>
<div class="t" style="left:531px;top:904px;font-size:11.5px">[20] Final</div>
<svg style="left:589px;top:909px" width="14" height="10"><use href="#station"/></svg>
<div class="t" style="left:606px;top:904px;font-size:11.5px">[30] Pack</div>
<svg style="left:374px;top:930px" width="14" height="9"><use href="#line"/></svg>
<div class="t" style="left:391px;top:924px;font-size:11.5px">Extractor line</div>
<svg style="left:514px;top:930px" width="14" height="9"><use href="#line"/></svg>
<div class="t" style="left:531px;top:924px;font-size:11.5px">Extractor</div>
<svg style="left:589px;top:930px" width="14" height="9"><use href="#line"/></svg>
<div class="t" style="left:606px;top:924px;font-size:11.5px">Extractor</div>

<div class="a" style="left:1443px;top:943px;width:20px;height:21px;border:1px solid #333;background:#fff"></div>
<svg style="left:1446px;top:946px" width="15" height="14" viewBox="0 0 15 14"><path d="M1 1h5l6 6-5 5-6-6z" fill="none" stroke="#444" stroke-width="1.2" stroke-linejoin="round"/><circle cx="4" cy="4" r="1" fill="#444"/><path d="M8 1l6 6-5 5" fill="none" stroke="#444" stroke-width="1.2"/></svg>
<div class="a" style="left:1464px;top:943px;width:20px;height:21px;border:1px solid #333;background:#fff"></div>
<svg style="left:1467px;top:946px" width="15" height="15" viewBox="0 0 15 15"><circle cx="6" cy="6" r="4.3" fill="none" stroke="#444" stroke-width="1.5"/><path d="M9 9l4.5 4.5" stroke="#444" stroke-width="1.8"/></svg>


<!-- ============ STATUS BAR ============ -->
<svg style="left:3px;top:976px" width="15" height="17" viewBox="0 0 15 17"><path d="M7.5 1C4.5 1 3.5 3 3.5 5.5c0 2 .2 3.5-1 5h10c-1.2-1.5-1-3-1-5C11.5 3 10.5 1 7.5 1z" fill="#b86a3a"/><circle cx="7.5" cy="6.5" r="3" fill="#f2c9a8"/><path d="M0.5 16v-1.5Q0.5 11 5 10.5h5q4.5.5 4.5 4V16z" fill="#d4809a"/><path d="M5.5 10.5L7.5 14l2-3.5" fill="#fff"/></svg>
<div class="t" style="left:23px;top:978px">Unauthenticated</div>
<svg style="left:1172px;top:978px" width="14" height="14" viewBox="0 0 14 14"><path d="M2.5 9.5A5 5 0 0 1 9 2.5M11.5 4.5A5 5 0 0 1 5 11.5" fill="none" stroke="#555" stroke-width="1.4"/><path d="M8 0.5l2.5 2-2.5 2M6 9.5l-2.5 2 2.5 2" fill="none" stroke="#555" stroke-width="1.3"/><path d="M1 1l12 12" stroke="#555" stroke-width="1.5"/></svg>
<div class="t" style="left:1192px;top:978px">1 object(s)</div>
<div class="a" style="left:1253px;top:973px;width:26px;height:24px;background:#f8f8f8;border:1px solid #d3d3d3;border-radius:4px"></div>
<svg style="left:1259px;top:978px" width="14" height="13" viewBox="0 0 14 13"><rect x="0.7" y="0.7" width="12.6" height="3" fill="none" stroke="#555" stroke-width="1.3"/><path d="M1.7 3.7v8.6h10.6V3.7" fill="none" stroke="#555" stroke-width="1.3"/><path d="M7 11V7M5 8.5l2-2 2 2" fill="#555" stroke="#555" stroke-width="1.3"/></svg>
<div class="a" style="left:1286px;top:973px;width:26px;height:24px;background:#f8f8f8;border:1px solid #d3d3d3;border-radius:4px"></div>
<svg style="left:1294px;top:978px" width="10" height="14" viewBox="0 0 10 14"><path d="M2 0.8h6M3 0.8v5.5L1 8.5h8L7 6.3V0.8" fill="none" stroke="#555" stroke-width="1.3" stroke-linejoin="round"/><path d="M5 8.5V14" stroke="#555" stroke-width="1.4"/></svg>
<div class="t" style="left:1371px;top:978px">Time Unit:</div>
<div class="a" style="left:1429px;top:973px;width:56px;height:23px;background:#fff;border:1px solid #cfcfcf;border-radius:4px"></div>
<div class="t" style="left:1433px;top:978px">s</div>
<svg style="left:1469px;top:982px" width="10" height="6"><use href="#chev"/></svg>

<!-- ============ LEFT PANEL ============ -->
<div class="a" style="left:0;top:34px;width:111px;height:23px;background:#fff;border-top:2px solid #1a73d0"></div>
<div class="a" style="left:111px;top:34px;width:100px;height:22px;background:#f0f0f0;border-right:1px solid #a0a0a0;border-left:1px solid #c8c8c8"></div>
<svg style="left:3px;top:38px" width="14" height="14"><use href="#bars"/></svg>
<div class="t" style="left:21px;top:38px;font-size:11.5px">Balance Tree</div>
<svg style="left:94px;top:41px" width="10" height="10"><use href="#xbtn"/></svg>
<svg style="left:117px;top:38px" width="16" height="14" viewBox="0 0 16 14"><rect x="5" y="0" width="5" height="5" fill="#9a9a9a"/><rect x="0" y="5" width="6" height="7" fill="#777"/><rect x="7" y="6" width="7" height="7" fill="#555"/></svg>
<div class="t" style="left:136px;top:38px;font-size:11.5px">Variant Codes</div>
<svg style="left:249px;top:39px" width="11" height="5"><use href="#minbtn"/></svg>
<svg style="left:272px;top:39px" width="11" height="10"><use href="#maxbtn"/></svg>

<div class="a" style="left:0;top:59px;width:291px;height:52px;background:#f0f0f0"></div>
<div class="a" style="left:2px;top:84px;width:289px;height:1px;background:#a8a8a8"></div>
<svg style="left:4px;top:63px" width="14" height="14"><use href="#factory"/></svg>
<svg style="left:27px;top:63px" width="14" height="14"><use href="#warehouse"/></svg>
<svg style="left:50px;top:68px" width="14" height="9"><use href="#line"/></svg>
<svg style="left:73px;top:67px" width="14" height="10"><use href="#station"/></svg>
<svg style="left:97px;top:64px;color:#a0a0a0" width="12" height="12"><use href="#person"/></svg>
<svg style="left:119px;top:63px" width="14" height="14" viewBox="0 0 14 14"><circle cx="3" cy="3" r="2" fill="none" stroke="#a0a0a0" stroke-width="1.6"/><path d="M4.5 3.5l4 8" stroke="#a0a0a0" stroke-width="2.2"/><path d="M4.5 3h4M9 0.5v5M9 1.5h5M9 4.5h5" stroke="#a0a0a0" stroke-width="1.3"/><rect x="0" y="12" width="14" height="2" rx="1" fill="#a0a0a0"/></svg>
<svg style="left:142px;top:63px" width="14" height="14" viewBox="0 0 14 14"><path d="M4.5 0h4l3.5 3.5V11H10V4H4.5z" fill="#a0a0a0"/><path d="M0 3h6.5L10 6.5V14H0z" fill="#a0a0a0"/><path d="M1 9h6M1 11h5" stroke="#f0f0f0" stroke-width="0.9"/></svg>
<svg style="left:166px;top:63px" width="12" height="14" viewBox="0 0 12 14"><path d="M1 0h6.5L12 4.5V14H0V1z" fill="#a0a0a0"/><path d="M7.5 0.5v4h4" fill="#f0f0f0"/><path d="M1 8h8.5M1 10.5h7" stroke="#f0f0f0" stroke-width="1"/></svg>
<svg style="left:188px;top:62px" width="16" height="16" viewBox="0 0 16 16"><rect x="0" y="0" width="5" height="5" fill="#3a8ac9"/><rect x="5" y="6" width="3" height="3" fill="#e0a526"/><rect x="8" y="8" width="8" height="8" fill="#d9506b"/></svg>
<svg style="left:210px;top:68px" width="9" height="5" viewBox="0 0 9 5"><path d="M0 0h9L4.5 5z" fill="#111"/></svg>
<div class="a" style="left:224px;top:61px;width:1px;height:18px;background:#444"></div>

<svg style="left:3px;top:93px" width="16" height="14" viewBox="0 0 16 14"><path d="M4.5 6.5Q7 4 11 5L15.5 4.8Q14 7 11 8.5Q8 10 4.5 9z" fill="#a8a8a8"/><path d="M0.5 5.5h4v7h-4z" fill="#a8a8a8"/><path d="M1.5 6.3h2M1.8 9.5v2h2" stroke="#f0f0f0" stroke-width="1" fill="none"/></svg>
<svg style="left:26.5px;top:92.5px" width="15" height="15" viewBox="0 0 16 16"><path fill="#a8a8a8" fill-rule="evenodd" d="M6.6 0.3h2.8l.4 2.1 1.5.6 1.8-1.2 2 2-1.2 1.8.6 1.5 2.1.4v2.8l-2.1.4-.6 1.5 1.2 1.8-2 2-1.8-1.2-1.5.6-.4 2.1H6.6l-.4-2.1-1.5-.6-1.8 1.2-2-2 1.2-1.8-.6-1.5L.3 9.4V6.6l2.1-.4.6-1.5-1.2-1.8 2-2 1.8 1.2 1.5-.6z M8 5a3 3 0 1 0 .01 0z"/><path d="M1 10.5h4v5H1z" fill="#a8a8a8"/><path d="M1.8 11.5h2.2M2 13v2h2" stroke="#f0f0f0" stroke-width="1" fill="none"/></svg>
<svg style="left:49px;top:92px" width="16" height="16" viewBox="0 0 16 16"><circle cx="8" cy="8" r="7.2" fill="none" stroke="#a8a8a8" stroke-width="1.3"/><path d="M8 1.3v6.7h6.7A6.7 6.7 0 0 0 8 1.3z" fill="#a8a8a8"/></svg>
<svg style="left:72px;top:92px" width="16" height="16" viewBox="0 0 16 16"><circle cx="8" cy="8" r="8" fill="#a8a8a8"/><path d="M8.00 4.80 L10.77 6.40 L10.77 9.60 L8.00 11.20 L5.23 9.60 L5.23 6.40z" fill="#f0f0f0"/><path d="M8.00 4.80L16.83 9.90M10.77 6.40L10.77 16.60M10.77 9.60L1.94 14.70M8.00 11.20L-0.83 6.10M5.23 9.60L5.23 -0.60M5.23 6.40L14.06 1.30" stroke="#f0f0f0" stroke-width="1.1"/></svg>

<!-- tree -->
<svg style="left:6px;top:117px" width="10" height="6"><use href="#chev"/></svg>
<svg style="left:20px;top:113px" width="14" height="14"><use href="#factory"/></svg>
<div class="t" style="left:40px;top:113px;font-size:11.7px">Gothenburg</div>
<div class="a" style="left:33px;top:129px;width:96px;height:18px;background:#d9d9d9;border-radius:2px"></div>
<svg style="left:22px;top:135px" width="10" height="6"><use href="#chev"/></svg>
<svg style="left:36px;top:136px" width="14" height="9"><use href="#line"/></svg>
<div class="t" style="left:56px;top:131px;font-size:11.7px">Extractor line</div>
<svg style="left:38px;top:153px" width="10" height="6"><use href="#chev"/></svg>
<svg style="left:52px;top:153px" width="14" height="10"><use href="#station"/></svg>
<div class="t" style="left:72px;top:149px;font-size:11.7px">[10] Pre assembly</div>
<svg style="left:69px;top:168px;color:#d04b68" width="12" height="12"><use href="#person"/></svg>
<div class="t" style="left:88px;top:167px;font-size:11.7px">No name</div>
<svg style="left:67px;top:184px" width="16" height="16" viewBox="67 184 16 16"><path d="M73 185.3h5.5l3.2 3.2v8.3h-3" fill="none" stroke="#3aa55a" stroke-width="1.2"/><path d="M77.5 185.5v3.5h3.5" fill="none" stroke="#3aa55a" stroke-width="1"/><path d="M69 187.2h5.5l3 3V199H69q-.8 0-.8-.8V188q0-.8.8-.8z" fill="#3aa55a"/><path d="M74.3 187.5v3h3" fill="#bfe6c8"/><path d="M69.5 192.8h6.5M69.5 195h5" stroke="#fff" stroke-width="1"/></svg>
<div class="t" style="left:88px;top:185px;font-size:11.7px">[10-10] No name</div>
<svg style="left:52px;top:207px" width="14" height="10"><use href="#station"/></svg>
<div class="t" style="left:72px;top:203px;font-size:11.7px">[20] Final assembly</div>
<svg style="left:52px;top:225px" width="14" height="10"><use href="#station"/></svg>
<div class="t" style="left:72px;top:221px;font-size:11.7px">[30] Pack</div>

<div class="a" style="left:270px;top:943px;width:21px;height:21px;border:1.5px solid #000;background:#f0f0f0;box-shadow:inset 0 0 0 1px #fff"></div>
<svg style="left:273px;top:946px" width="15" height="15" viewBox="0 0 15 15"><circle cx="6" cy="6" r="4.3" fill="none" stroke="#555" stroke-width="1.5"/><path d="M9 9l4.5 4.5" stroke="#555" stroke-width="1.8"/></svg>

</body></html>
